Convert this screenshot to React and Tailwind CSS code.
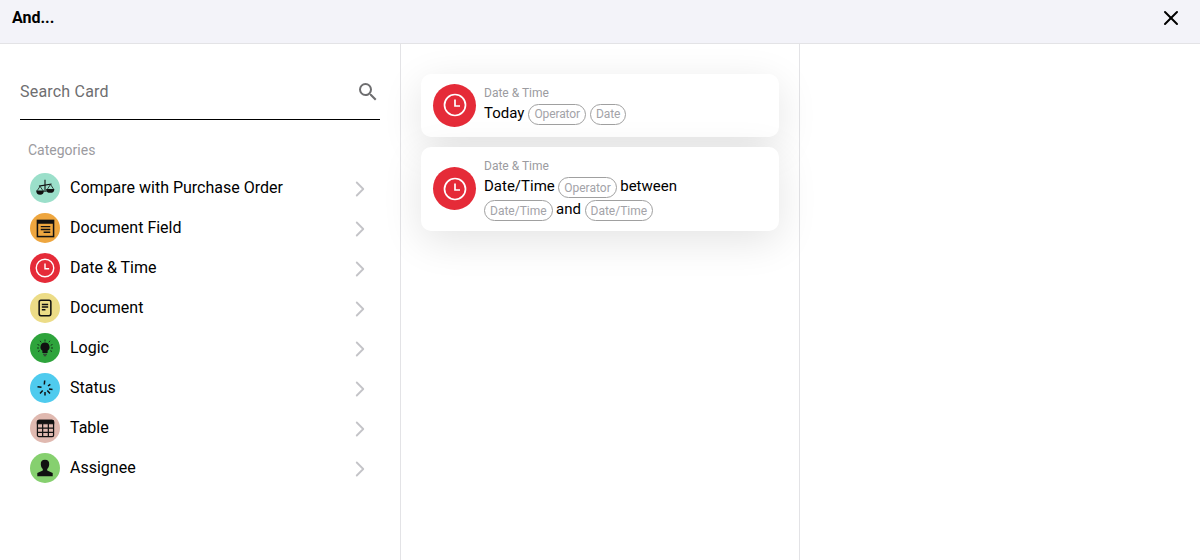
import { X, ChevronRight } from "lucide-react";

function ScaleIcon() {
  return (
    <svg viewBox="0 0 20 20" className="w-[22px] h-[22px]" fill="#111">
      <path d="M10 2.500v10" stroke="#111" strokeWidth="1" />
      <path d="M4.500 8.300L16 6.300" stroke="#111" strokeWidth="1" />
      <path d="M5.500 8.500l-2.700 4M5.500 8.500l2.700 4M15 6.800l-2.700 4M15 6.800l2.700 4" stroke="#111" strokeWidth="0.700" fill="none" />
      <path d="M2 12.300h7a3.500 3.800 0 0 1-7 0z" />
      <path d="M11 10.800h7.500a3.750 3.600 0 0 1-7.500 0z" />
      <path d="M8.500 12.500h3v.8h-3z" />
    </svg>
  );
}

function FieldIcon() {
  return (
    <svg viewBox="0 0 20 20" className="w-[19px] h-[19px]">
      <rect x="1.500" y="1.500" width="17" height="17" fill="none" stroke="#111" strokeWidth="1.600" />
      <rect x="1.500" y="1.500" width="17" height="3.500" fill="#111" />
      <path d="M5 8h10M5 11h10M8 14h7" stroke="#111" strokeWidth="1.500" />
    </svg>
  );
}

function ClockIcon({ size }) {
  return (
    <svg viewBox="0 0 24 24" className={size} fill="none" stroke="#fff" strokeWidth="1.700">
      <circle cx="12" cy="12" r="10.500" />
      <path d="M12 6.500V13h5" />
    </svg>
  );
}

function DocIcon() {
  return (
    <svg viewBox="0 0 20 20" className="w-[18px] h-[18px]" fill="none" stroke="#111" strokeWidth="1.700">
      <rect x="3.500" y="1.500" width="13" height="17" rx="2" />
      <path d="M6.500 6h7M6.500 9h7M6.500 12h4" />
    </svg>
  );
}

function BulbIcon() {
  return (
    <svg viewBox="0 0 20 20" className="w-5 h-5" fill="#111">
      <path d="M10 4.500a4.500 4.500 0 0 0-2.600 8.200V15h5.200v-2.300A4.500 4.500 0 0 0 10 4.500z" />
      <path d="M8 15.700h4v1.100H8zM8.800 17.300h2.400v1H8.800z" fill="#333" />
      <path d="M10 1.500v2M5 2.800l1.200 1.500M15 2.800l-1.200 1.500M2.500 6.500l1.800.8M17.500 6.500l-1.800.8M2 10h2M16 10h2M3 13.500l1.700-.8M17 13.500l-1.700-.8" stroke="#111" strokeWidth="0.800" />
    </svg>
  );
}

function SpinnerIcon() {
  return (
    <svg viewBox="0 0 20 20" className="w-5 h-5" fill="none" stroke="#111" strokeWidth="1.500">
      <path d="M9.700 2.500l-.4 4M2.500 8.700l4 .6M13 8l2.300-1.700M14 11l3.500 .5M5 15.500l2.700-3M15 15.500l-2.700-3M10 17.500v-3.500" />
    </svg>
  );
}

function TableIcon() {
  return (
    <svg viewBox="0 0 20 20" className="w-[19px] h-[19px]" fill="none" stroke="#111" strokeWidth="1.300">
      <path d="M1.500 5V3a1.500 1.500 0 0 1 1.500-1.500h14A1.500 1.500 0 0 1 18.500 3v2z" fill="#111" />
      <rect x="1.500" y="1.500" width="17" height="17" rx="1.500" />
      <path d="M1.500 9.500h17M1.500 14h17M7 5v13.500M13 5v13.500" />
    </svg>
  );
}

function PersonIcon() {
  return (
    <svg viewBox="0 0 20 20" className="w-[22px] h-[22px]" fill="#111">
      <path d="M10 2.500c-2.800 0-4 1.800-3.800 4.300.1 1.800.9 3.200 1.800 4.200v1.300L3 14.500V17.500h14V14.500l-5-2.200V11c.9-1 1.700-2.400 1.800-4.200C14 4.300 12.800 2.500 10 2.500z" />
    </svg>
  );
}

function SearchGlyph() {
  return (
    <svg viewBox="0 0 24 24" className="w-6 h-6" fill="#6e6e70">
      <path d="M15.500 14h-.79l-.28-.27A6.470 6.470 0 0 0 16 9.500 6.500 6.500 0 1 0 9.500 16c1.610 0 3.090-.59 4.230-1.570l.27.28v.79l5 4.990L20.490 19l-4.990-5zm-6 0C7.010 14 5 11.990 5 9.500S7.010 5 9.500 5 14 7.010 14 9.500 11.990 14 9.500 14z" />
    </svg>
  );
}

const categories = [
  { name: "Compare with Purchase Order", bg: "bg-[#9bdfca]", icon: <ScaleIcon /> },
  { name: "Document Field", bg: "bg-[#eea63f]", icon: <FieldIcon /> },
  { name: "Date & Time", bg: "bg-[#e52b38]", icon: <ClockIcon size="w-[20px] h-[20px]" /> },
  { name: "Document", bg: "bg-[#ecdc87]", icon: <DocIcon /> },
  { name: "Logic", bg: "bg-[#2ea43c]", icon: <BulbIcon /> },
  { name: "Status", bg: "bg-[#4fcbee]", icon: <SpinnerIcon /> },
  { name: "Table", bg: "bg-[#e0b9b0]", icon: <TableIcon /> },
  { name: "Assignee", bg: "bg-[#86d06f]", icon: <PersonIcon /> },
];

function Pill({ children, className = "" }) {
  return (
    <span className={`inline-flex items-center h-[21px] mt-px -mb-px px-[5px] rounded-full border border-[#a0a0a0] text-xs text-[#a3a3a8] ${className}`}>
      {children}
    </span>
  );
}

function Card({ children, className, bodyClass }) {
  return (
    <div className={`flex items-center gap-2 px-3 bg-white rounded-[10px] shadow-[0_10px_40px_rgba(0,0,0,0.11)] ${className}`}>
      <div className="w-[43px] h-[43px] shrink-0 -mt-px rounded-full bg-[#e52b38] flex items-center justify-center">
        <ClockIcon size="w-[24px] h-[24px]" />
      </div>
      <div className={`flex-1 ${bodyClass}`}>
        <div className="text-xs leading-[14px] text-[#9b9ba0]">Date &amp; Time</div>
        {children}
      </div>
    </div>
  );
}

export default function App() {
  return (
    <div className="flex flex-col h-[560px] w-[1200px] overflow-hidden bg-white font-['Roboto',sans-serif] text-black">
      {/* Header */}
      <div className="flex items-center justify-between h-[44px] shrink-0 pl-3 pr-[17px] pb-2 bg-[#f3f3f9] border-b border-[#e3e3e6]">
        <span className="text-base font-bold">And...</span>
        <X className="w-[24px] h-[24px] text-black" strokeWidth={2} />
      </div>

      <div className="flex flex-1 min-h-0">
        {/* Categories */}
        <aside className="w-[401px] shrink-0 border-r border-[#e3e3e6] pt-[27px] px-5">
          <div className="flex items-center justify-between h-[49px] pb-[7px] border-b border-black">
            <span className="text-base text-[#6e6e70] tracking-[0.2px]">Search Card</span>
            <SearchGlyph />
          </div>
          <div className="mt-[22px] ml-2 text-sm leading-[16px] text-[#9b9ba0]">Categories</div>
          <ul className="mt-[10px]">
            {categories.map((c) => (
              <li key={c.name} className="flex items-center h-10 px-[10px]">
                <div className={`w-[30px] h-[30px] rounded-full flex items-center justify-center ${c.bg}`}>
                  {c.icon}
                </div>
                <span className="flex-1 ml-[10px] text-base -mt-px">{c.name}</span>
                <ChevronRight className="w-[26px] h-[26px] -mr-[3px] mt-[2px] text-[#c4c4c8]" strokeWidth={1.700} />
              </li>
            ))}
          </ul>
        </aside>

        {/* Cards */}
        <main className="w-[399px] shrink-0 border-r border-[#e3e3e6] pt-[30px] px-5 flex flex-col gap-[10px]">
          <Card className="h-[63px]" bodyClass="-mt-[2px]">
            <div className="flex items-center gap-1 mt-[3px] text-[15px] leading-[21px]">
              Today <Pill className="tracking-[-0.1px]">Operator</Pill> <Pill className="tracking-[-0.1px]">Date</Pill>
            </div>
          </Card>
          <Card className="h-[84px]" bodyClass="mt-[1px]">
            <div className="flex items-center gap-[3.5px] mt-[3px] text-[15px] leading-[21px]">
              Date/Time <Pill>Operator</Pill> between
            </div>
            <div className="flex items-center gap-[3.5px] mt-[2px] text-[15px] leading-[21px]">
              <Pill>Date/Time</Pill> and <Pill>Date/Time</Pill>
            </div>
          </Card>
        </main>

        <div className="flex-1" />
      </div>
    </div>
  );
}
